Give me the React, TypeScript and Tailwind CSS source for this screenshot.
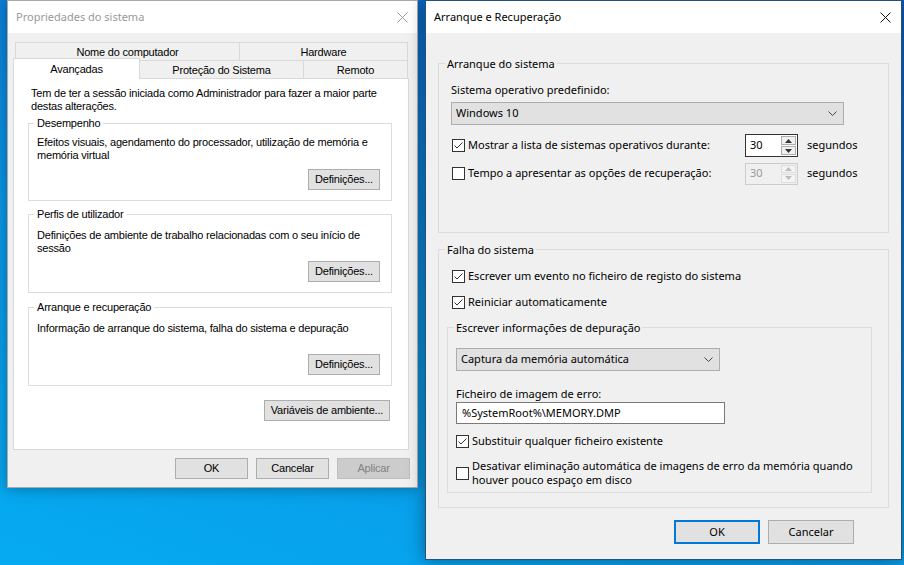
import React from "react";

function Check({ checked }: { checked?: boolean }) {
  return (
    <span className="w-[13px] h-[13px] border border-[#333333] bg-white flex items-center justify-center shrink-0">
      {checked && (
        <svg width="11" height="11" viewBox="0 0 11 11">
          <path d="M1.5 5.5 L4 8 L9.5 2.5" stroke="#333333" fill="none" strokeWidth="1" />
        </svg>
      )}
    </span>
  );
}

function Chevron() {
  return (
    <svg width="9" height="5" viewBox="0 0 9 5">
      <path d="M0.5 0.5 L4.5 4.5 L8.5 0.5" stroke="#444444" fill="none" strokeWidth="1" />
    </svg>
  );
}

function CloseX({ color }: { color: string }) {
  return (
    <svg width="11" height="11" viewBox="0 0 11 11">
      <path d="M0.5 0.5 L10.5 10.5 M10.5 0.5 L0.5 10.5" stroke={color} fill="none" strokeWidth="1" />
    </svg>
  );
}

function Spin({ disabled }: { disabled?: boolean }) {
  const arrow = disabled ? "#bcbcbc" : "#333333";
  return (
    <div
      className={
        disabled
          ? "flex w-[53px] h-[22px] border border-[#cccccc] bg-[#f0f0f0]"
          : "flex w-[53px] h-[23px] border border-[#333333] bg-white"
      }
    >
      <div className={disabled ? "flex-1 pl-[4px] flex items-center text-[#9a9a9a]" : "flex-1 pl-[4px] flex items-center"}>
        30
      </div>
      <div className="w-[16px] flex flex-col gap-[1px] py-[1px] pr-[1px]">
        <div className={disabled ? "flex-1 border border-[#dddddd] bg-[#f4f4f4] flex items-center justify-center" : "flex-1 border border-[#adadad] bg-[#f0f0f0] flex items-center justify-center"}>
          <svg width="7" height="4" viewBox="0 0 7 4">
            <path d="M0 4 L3.5 0 L7 4 Z" fill={arrow} />
          </svg>
        </div>
        <div className={disabled ? "flex-1 border border-[#dddddd] bg-[#f4f4f4] flex items-center justify-center" : "flex-1 border border-[#adadad] bg-[#f0f0f0] flex items-center justify-center"}>
          <svg width="7" height="4" viewBox="0 0 7 4">
            <path d="M0 0 L3.5 4 L7 0 Z" fill={arrow} />
          </svg>
        </div>
      </div>
    </div>
  );
}

function LeftGroup({
  title,
  lines,
  h,
  pt,
  mt,
}: {
  title: string;
  lines: string[];
  h: string;
  pt: string;
  mt: string;
}) {
  return (
    <div className={`relative ${mt} ${h} w-[364px] border border-[#dcdcdc] flex flex-col`}>
      <span className="absolute -top-[8px] left-[5px] bg-white px-[3px] leading-[14px]">{title}</span>
      <div className={`${pt} pl-[8px] leading-[13px]`}>
        {lines.map((l, i) => (
          <div key={i}>{l}</div>
        ))}
      </div>
      <div className="mt-auto mb-[10px] mr-[11px] self-end">
        <button className="w-[72px] h-[21px] bg-[#e1e1e1] border border-[#adadad] flex items-center justify-center">
          Definições...
        </button>
      </div>
    </div>
  );
}

function LeftWindow() {
  return (
    <div className="absolute left-[7px] top-0 w-[411px] h-[488px] border border-[#aaaaaa] bg-[#f0f0f0] flex flex-col shadow-[0_0_14px_rgba(0,0,0,0.35)] font-['Liberation_Sans',Arial,sans-serif] text-[11px] text-black">
      <div className="h-[32px] shrink-0 bg-white flex items-center justify-between pl-[8px] pr-[9px] font-['Noto_Sans',sans-serif] text-[11px] text-[#999999]">
        <span>Propriedades do sistema</span>
        <CloseX color="#999999" />
      </div>
      <div className="pl-[5px] pr-[8px] pt-[9px] flex flex-col tracking-[-0.2px]">
        <div className="ml-[2px] w-[393px] h-[18px] flex">
          <div className="w-[224px] border-t border-l border-[#d9d9d9] flex items-center justify-center pt-[2px]">Nome do computador</div>
          <div className="flex-1 border-t border-l border-r border-[#d9d9d9] flex items-center justify-center pt-[2px]">Hardware</div>
        </div>
        <div className="w-[395px] h-[18px] flex">
          <div className="relative z-10 -mt-[2px] h-[21px] w-[127px] bg-white border-t border-l border-r border-[#d9d9d9] flex justify-center pt-[2px]">
            Avançadas
          </div>
          <div className="w-[163px] border-t border-[#d9d9d9] flex items-center justify-center pt-[1px]">Proteção do Sistema</div>
          <div className="w-[105px] border-t border-l border-r border-[#d9d9d9] flex items-center justify-center pt-[1px]">Remoto</div>
        </div>
        <div className="w-[396px] h-[372px] border border-[#d9d9d9] bg-white px-[14px] pt-[8px] flex flex-col">
          <div className="ml-[3px] leading-[13px]">
            <div>Tem de ter a sessão iniciada como Administrador para fazer a maior parte</div>
            <div>destas alterações.</div>
          </div>
          <LeftGroup
            title="Desempenho"
            lines={["Efeitos visuais, agendamento do processador, utilização de memória e", "memória virtual"]}
            h="h-[78px]"
            pt="pt-[12px]"
            mt="mt-[10px]"
          />
          <LeftGroup
            title="Perfis de utilizador"
            lines={["Definições de ambiente de trabalho relacionadas com o seu início de", "sessão"]}
            h="h-[79px]"
            pt="pt-[14px]"
            mt="mt-[13px]"
          />
          <LeftGroup
            title="Arranque e recuperação"
            lines={["Informação de arranque do sistema, falha do sistema e depuração"]}
            h="h-[79px]"
            pt="pt-[14px]"
            mt="mt-[14px]"
          />
          <div className="mt-[14px] w-[364px] flex justify-end pr-[2px]">
            <button className="w-[126px] h-[21px] bg-[#e1e1e1] border border-[#adadad] flex items-center justify-center">
              Variáveis de ambiente...
            </button>
          </div>
        </div>
        <div className="mt-[8px] -mr-[1px] flex justify-end gap-[8px]">
          <button className="w-[73px] h-[21px] bg-[#e1e1e1] border border-[#adadad] flex items-center justify-center">OK</button>
          <button className="w-[73px] h-[21px] bg-[#e1e1e1] border border-[#adadad] flex items-center justify-center">Cancelar</button>
          <button className="w-[73px] h-[21px] bg-[#cccccc] border border-[#bfbfbf] text-[#838383] flex items-center justify-center">Aplicar</button>
        </div>
      </div>
    </div>
  );
}

function RightWindow() {
  return (
    <div className="absolute left-[425px] top-0 w-[477px] h-[560px] border border-[#24527f] bg-[#f0f0f0] flex flex-col shadow-[0_0_16px_rgba(0,0,0,0.4)] font-['Noto_Sans',sans-serif] text-[11px] text-black">
      <div className="h-[32px] shrink-0 bg-white flex items-center justify-between pl-[8px] pr-[10px]">
        <span>Arranque e Recuperação</span>
        <CloseX color="#111111" />
      </div>
      <div className="px-[12px] flex flex-col">
        {/* Arranque do sistema */}
        <div className="relative mt-[30px] h-[170px] border border-[#dcdcdc] pl-[12px] pt-[18px] flex flex-col">
          <span className="absolute -top-[8px] left-[6px] bg-[#f0f0f0] px-[2px] leading-[16px]">Arranque do sistema</span>
          <div className="leading-[16px]">Sistema operativo predefinido:</div>
          <div className="mt-[4px] w-[393px] h-[23px] bg-[#e1e1e1] border border-[#adadad] flex items-center justify-between pl-[4px] pr-[6px]">
            <span>Windows 10</span>
            <Chevron />
          </div>
          <div className="mt-[9px] h-[23px] flex items-center">
            <span className="ml-[1px]">
              <Check checked />
            </span>
            <span className="ml-[3px] w-[277px]">Mostrar a lista de sistemas operativos durante:</span>
            <Spin />
            <span className="ml-[9px]">segundos</span>
          </div>
          <div className="mt-[5px] h-[23px] flex items-center">
            <span className="ml-[1px]">
              <Check />
            </span>
            <span className="ml-[3px] w-[277px]">Tempo a apresentar as opções de recuperação:</span>
            <Spin disabled />
            <span className="ml-[9px]">segundos</span>
          </div>
        </div>
        {/* Falha do sistema */}
        <div className="relative mt-[16px] h-[259px] border border-[#dcdcdc] pt-[18px] flex flex-col">
          <span className="absolute -top-[8px] left-[6px] bg-[#f0f0f0] px-[2px] leading-[16px]">Falha do sistema</span>
          <div className="ml-[13px] h-[16px] flex items-center">
            <Check checked />
            <span className="ml-[3px]">Escrever um evento no ficheiro de registo do sistema</span>
          </div>
          <div className="ml-[13px] mt-[10px] h-[16px] flex items-center">
            <Check checked />
            <span className="ml-[3px]">Reiniciar automaticamente</span>
          </div>
          <div className="relative ml-[8px] mr-[16px] mt-[17px] h-[166px] border border-[#dcdcdc] pl-[8px] flex flex-col">
            <span className="absolute -top-[8px] left-[6px] bg-[#f0f0f0] px-[2px] leading-[16px]">Escrever informações de depuração</span>
            <div className="mt-[20px] w-[264px] h-[23px] bg-[#e1e1e1] border border-[#adadad] flex items-center justify-between pl-[4px] pr-[6px]">
              <span>Captura da memória automática</span>
              <Chevron />
            </div>
            <div className="mt-[15px] leading-[16px]">Ficheiro de imagem de erro:</div>
            <div className="w-[269px] h-[22px] bg-white border border-[#7a7a7a] flex items-center pl-[5px]">%SystemRoot%\MEMORY.DMP</div>
            <div className="mt-[9px] h-[16px] flex items-center">
              <Check checked />
              <span className="ml-[3px]">Substituir qualquer ficheiro existente</span>
            </div>
            <div className="mt-[10px] flex items-center">
              <Check />
              <div className="ml-[3px] leading-[14px]">
                <div>Desativar eliminação automática de imagens de erro da memória quando</div>
                <div>houver pouco espaço em disco</div>
              </div>
            </div>
          </div>
        </div>
        <div className="mt-[12px] mr-[35px] flex justify-end gap-[8px]">
          <button className="w-[86px] h-[24px] bg-[#e1e1e1] border-2 border-[#0078d7] flex items-center justify-center">OK</button>
          <button className="w-[86px] h-[24px] bg-[#e1e1e1] border border-[#adadad] flex items-center justify-center">Cancelar</button>
        </div>
      </div>
    </div>
  );
}

export default function App() {
  return (
    <div className="relative w-[904px] h-[565px] overflow-hidden bg-[linear-gradient(20deg,#05abf1_0%,#0a98e6_40%,#0b74d2_75%,#0a5cbf_100%)]">
      <LeftWindow />
      <RightWindow />
    </div>
  );
}
